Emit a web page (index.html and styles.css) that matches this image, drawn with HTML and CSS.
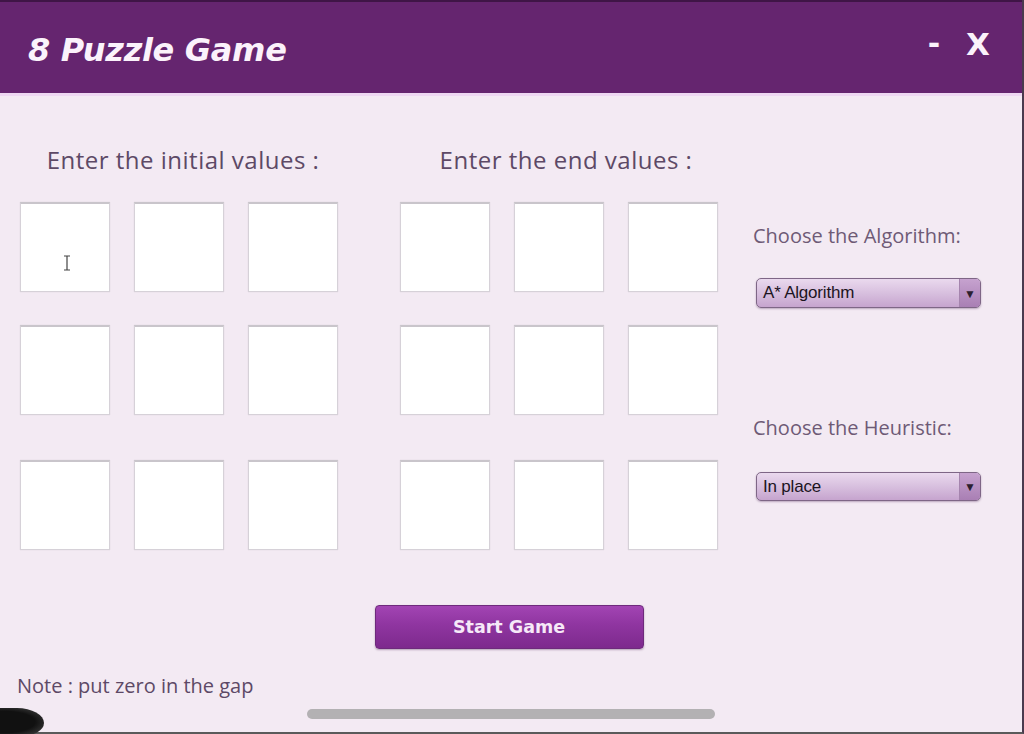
FILE: index.html
```html
<!DOCTYPE html>
<html>
<head>
<meta charset="utf-8">
<title>8 Puzzle Game</title>
<link rel="stylesheet" href="styles.css">
</head>
<body>
<div class="window">
  <header class="titlebar">
    <h1 class="title">8 Puzzle Game</h1>
    <div class="controls">
      <span class="ctrl minimize">-</span>
      <span class="ctrl close">X</span>
    </div>
  </header>
  <main class="content">
    <div class="main-row">
      <section class="panel panel-initial">
        <h2 class="panel-heading">Enter the initial values :</h2>
        <div class="grid">
          <div class="row row-1">
            <div class="cell"><svg class="ibeam" width="8" height="16" viewBox="0 0 8 16"><path d="M1 1h6M4 1v14M1 15h6" stroke="#444" stroke-width="1.2" fill="none"/></svg></div>
            <div class="cell"></div>
            <div class="cell"></div>
          </div>
          <div class="row row-2">
            <div class="cell"></div><div class="cell"></div><div class="cell"></div>
          </div>
          <div class="row row-3">
            <div class="cell"></div><div class="cell"></div><div class="cell"></div>
          </div>
        </div>
      </section>
      <section class="panel panel-end">
        <h2 class="panel-heading">Enter the end values :</h2>
        <div class="grid">
          <div class="row row-1">
            <div class="cell"></div><div class="cell"></div><div class="cell"></div>
          </div>
          <div class="row row-2">
            <div class="cell"></div><div class="cell"></div><div class="cell"></div>
          </div>
          <div class="row row-3">
            <div class="cell"></div><div class="cell"></div><div class="cell"></div>
          </div>
        </div>
      </section>
      <aside class="side">
        <div class="side-label">Choose the Algorithm:</div>
        <div class="select"><span class="select-text">A* Algorithm</span><span class="select-arrow">&#9660;</span></div>
        <div class="side-label label-2">Choose the Heuristic:</div>
        <div class="select"><span class="select-text">In place</span><span class="select-arrow">&#9660;</span></div>
      </aside>
    </div>
    <div class="button-row">
      <button class="start-btn">Start Game</button>
    </div>
    <p class="note">Note : put zero in the gap</p>
  </main>
  <div class="home-indicator"></div>
  <div class="corner-blob"></div>
</div>
</body>
</html>
```
FILE: styles.css
```css
* { box-sizing: border-box; }
html, body { margin: 0; padding: 0; }
body {
  width: 1024px;
  height: 734px;
  overflow: hidden;
  background: #f3eaf3;
  font-family: "Open Sans", "Noto Sans", sans-serif;
}
.window {
  position: relative;
  width: 1024px;
  height: 734px;
  display: flex;
  flex-direction: column;
  background: #f3eaf3;
  border-right: 2px solid #4a3a4e;
  border-bottom: 2px solid #5a5a5a;
}
.titlebar {
  height: 96px;
  flex: none;
  display: flex;
  align-items: center;
  justify-content: space-between;
  background: #65256f;
  border-top: 2px solid #3f1546;
  border-bottom: 3px solid #eed7f2;
  padding: 4px 32px 0 28px;
}
.title {
  margin: 0;
  font-family: "DejaVu Sans", sans-serif;
  font-weight: bold;
  font-style: italic;
  font-size: 32px;
  color: #fbf2fb;
  letter-spacing: -0.3px;
}
.controls {
  display: flex;
  align-items: center;
  gap: 26px;
  font-family: "DejaVu Sans", sans-serif;
  font-weight: bold;
  color: #fbf2fb;
  margin-top: -12px;
}
.ctrl.minimize { font-size: 30px; }
.ctrl.close { font-size: 31px; }
.content {
  flex: 1;
  display: flex;
  flex-direction: column;
  padding: 50px 0 0 0;
}
.main-row {
  display: flex;
  align-items: flex-start;
}
.panel {
  display: flex;
  flex-direction: column;
  width: 318px;
}
.panel-initial { margin-left: 20px; }
.panel-end { margin-left: 62px; }
.panel-heading {
  margin: 0 0 28px 0;
  font-weight: normal;
  font-size: 24px;
  letter-spacing: 0.5px;
  line-height: 28px;
  color: #5d4966;
  text-align: center;
  padding-left: 8px;
  white-space: nowrap;
}
.panel-end .panel-heading { padding-left: 14px; }
.grid { display: flex; flex-direction: column; }
.row { display: flex; gap: 24px; }
.row-2 { margin-top: 33px; }
.row-3 { margin-top: 45px; }
.cell {
  width: 90px;
  height: 90px;
  background: #ffffff;
  border: 1px solid #d6d1d8;
  border-top: 2px solid #c9c5cb;
  box-shadow: 0 0 1px rgba(0,0,0,0.12);
  display: flex;
  align-items: center;
  justify-content: center;
}
.ibeam { margin-left: 3px; margin-top: 30px; }
.side {
  display: flex;
  flex-direction: column;
  margin-left: 35px;
  margin-top: 78px;
}
.side-label {
  font-size: 20px;
  line-height: 24px;
  color: #6e5a76;
  white-space: nowrap;
}
.label-2 { margin-top: 108px; }
.select {
  margin-top: 30px;
  margin-left: 3px;
  width: 225px;
  height: 30px;
  display: flex;
  align-items: stretch;
  border: 1px solid #7e6686;
  border-radius: 5px;
  background: linear-gradient(#ead9ee, #d6bddd 55%, #c6a4ce);
  box-shadow: 0 1px 2px rgba(80,40,90,0.35);
  overflow: hidden;
}
.label-2 + .select { height: 29px; margin-top: 32px; }
.select-text {
  flex: 1;
  display: flex;
  align-items: center;
  padding-left: 6px;
  font-family: "Liberation Sans", Arial, sans-serif;
  font-size: 17px;
  letter-spacing: -0.2px;
  color: #1c141e;
}
.select-arrow {
  width: 21px;
  display: flex;
  align-items: center;
  justify-content: center;
  font-size: 12px;
  color: #2c1e30;
  background: linear-gradient(#c6a2cf, #a97fb4);
  border-left: 1px solid #a584ae;
}
.button-row {
  display: flex;
  justify-content: center;
  margin-top: 55px;
  padding-right: 4px;
}
.start-btn {
  width: 269px;
  height: 44px;
  border: 1px solid #6e2a7c;
  border-radius: 4px;
  background: linear-gradient(#a244b3, #8f35a0 45%, #7d2a8d);
  box-shadow: 0 1px 2px rgba(60,20,70,0.35);
  color: #f6e9f8;
  font-family: "DejaVu Sans", sans-serif;
  font-weight: bold;
  font-size: 17.5px;
  padding: 0;
}
.note {
  margin: 25px 0 0 17px;
  font-size: 20px;
  line-height: 24px;
  color: #5d4966;
}
.home-indicator {
  position: absolute;
  left: 307px;
  top: 709px;
  width: 408px;
  height: 10px;
  border-radius: 5px;
  background: #b3b1b3;
}
.corner-blob {
  position: absolute;
  left: -14px;
  top: 708px;
  width: 58px;
  height: 28px;
  border-radius: 0 60% 50% 0 / 0 70% 60% 0;
  background: radial-gradient(ellipse at 30% 50%, #111 55%, #333 80%, rgba(40,40,40,0) 100%);
}
```
